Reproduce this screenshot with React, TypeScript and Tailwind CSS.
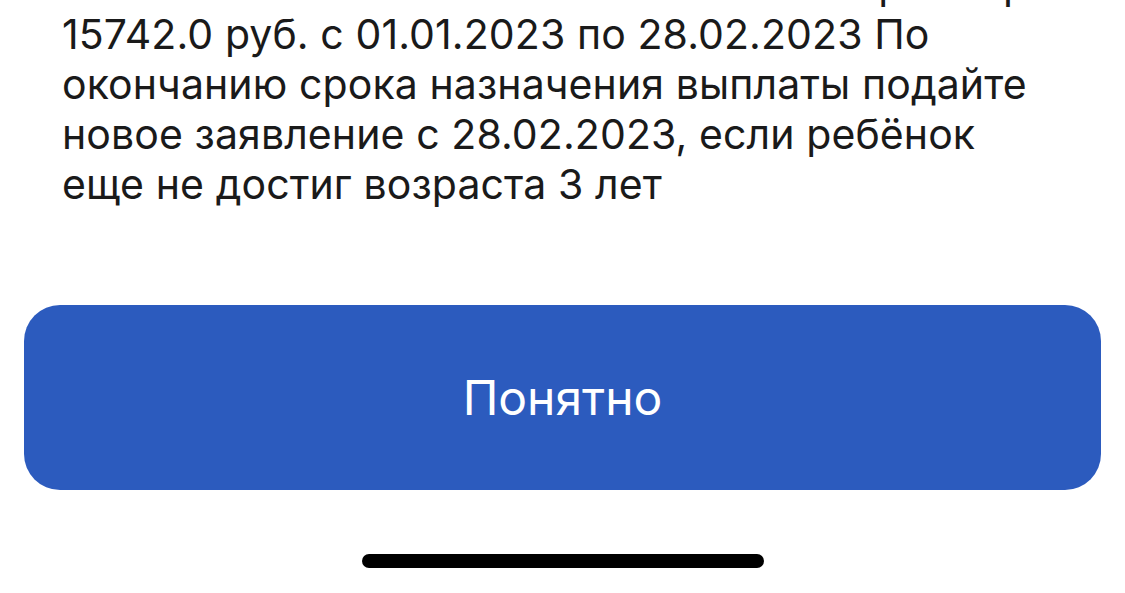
const LINES = [
  'Вам назначена ежемесячная выплата в размере',
  '15742.0 руб. с 01.01.2023 по 28.02.2023 По',
  'окончанию срока назначения выплаты подайте',
  'новое заявление с 28.02.2023, если ребёнок',
  'еще не достиг возраста 3 лет',
]

export default function App() {
  return (
    <div
      className="w-[1125px] h-[593px] bg-white overflow-hidden flex flex-col"
      style={{ fontFamily: 'Inter, "Noto Sans", sans-serif' }}
    >
      {/* Message body, scrolled so the first line is mostly hidden */}
      <div className="pl-[62px] pr-6 -mt-[41px] text-[41px] leading-[50px] text-[#1a1a1a] tracking-[0.1px]">
        {LINES.map(l => (
          <div key={l} className="whitespace-nowrap">{l}</div>
        ))}
      </div>

      <div className="px-6 mt-[96px]">
        <button className="w-full h-[185px] rounded-[36px] bg-[#2c5bbe] text-white text-[48px] flex items-center justify-center">
          Понятно
        </button>
      </div>

      {/* Home indicator */}
      <div className="mt-[64px] flex justify-center">
        <div className="w-[402px] h-[14px] rounded-full bg-black" />
      </div>
    </div>
  )
}
